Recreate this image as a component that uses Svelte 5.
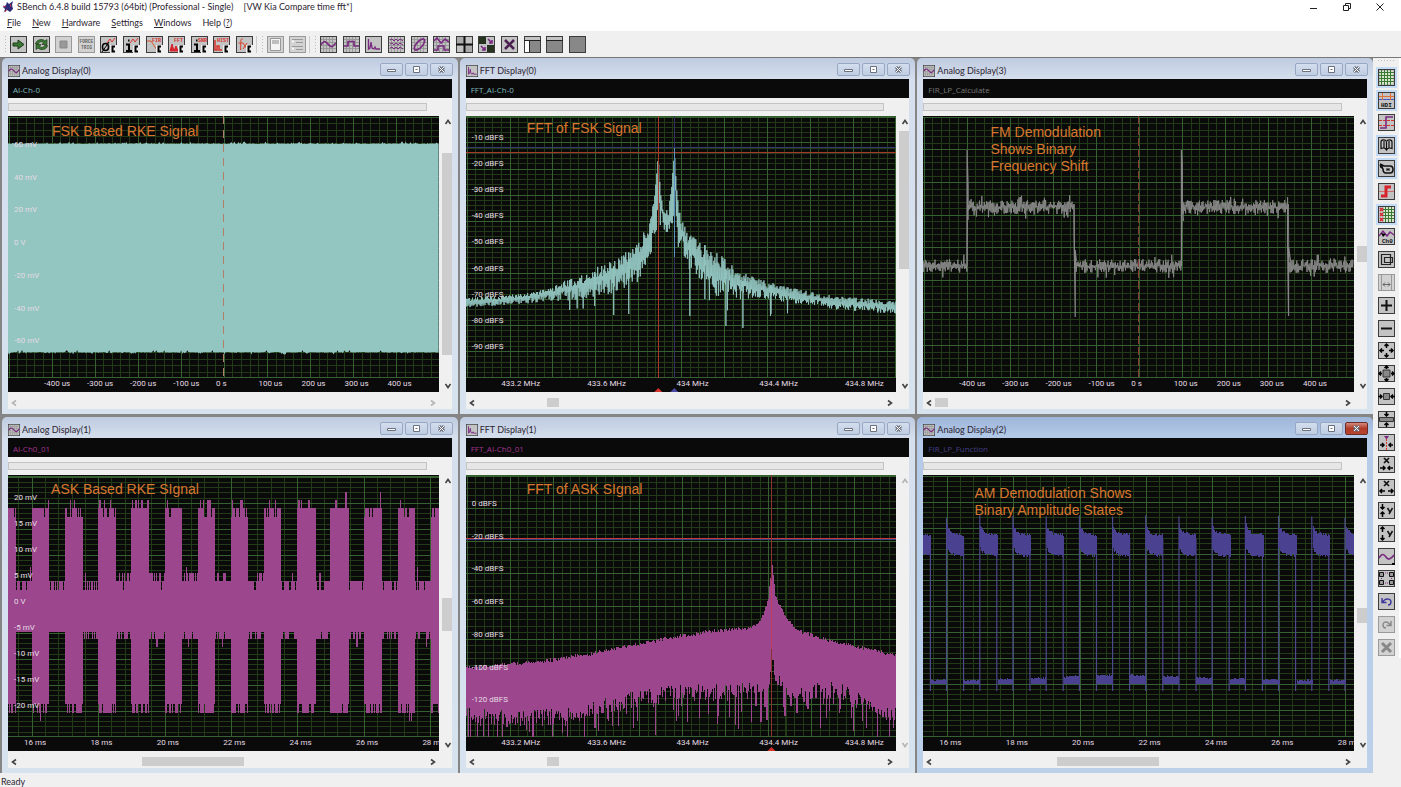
<script>
	// small seeded generator so the traces look the same on every load
	function seeded(seed) {
		let s = seed;
		return () => {
			s = (s * 1664525 + 1013904223) % 4294967296;
			return s / 4294967296;
		};
	}

	const W = 430;
	const H = 262;

	// linear lookup in a list of [x, a, b] rows
	function lookup(rows, x) {
		for (let i = 1; i < rows.length; i++) {
			if (x <= rows[i][0]) {
				const p = rows[i - 1];
				const q = rows[i];
				const t = (x - p[0]) / (q[0] - p[0] || 1);
				return [p[1] + (q[1] - p[1]) * t, p[2] + (q[2] - p[2]) * t];
			}
		}
		const last = rows[rows.length - 1];
		return [last[1], last[2]];
	}

	const f = (n) => n.toFixed(1);

	function grid(x0, dx, y0, dy) {
		let minor = '';
		let major = '';
		for (let i = -5; i < 70; i++) {
			const x = x0 + (i * dx) / 5;
			if (x < 0 || x > W) continue;
			if (i % 5 === 0) major += `M${f(x)} 1V${H}`;
			else minor += `M${f(x)} 1V${H}`;
		}
		for (let i = -5; i < 70; i++) {
			const y = y0 + (i * dy) / 5;
			if (y < 0 || y > H) continue;
			if (i % 5 === 0) major += `M0 ${f(y)}H${W}`;
			else minor += `M0 ${f(y)}H${W}`;
		}
		return { minor, major: major + `M0 1.5H${W}M0 ${H - 0.5}H${W}` };
	}

	function fskTrace() {
		const r = seeded(7);
		let d = 'M0 28';
		for (let x = 0; x <= W; x += 1) d += `L${x} ${f(28 - (r() > 0.8 ? r() * 2.5 : r() * 0.6))}`;
		for (let x = W; x >= 0; x -= 1) d += `L${x} ${f(236 + (r() > 0.8 ? r() * 2.5 : r() * 0.6) - (r() > 0.95 ? 2 : 0))}`;
		return d + 'Z';
	}

	function fftFskTrace() {
		const rows = [
			[0, 182, 192], [43, 179, 189], [76, 174, 186], [110, 160, 184], [143, 146, 178], [170, 129, 170],
			[183, 106, 146], [188, 83, 124], [191, 50, 110], [192, 37, 60], [194, 75, 100], [198, 95, 117],
			[202, 93, 119], [206, 65, 110], [208, 31, 90], [211, 80, 125], [216, 104, 135], [221, 112, 150],
			[233, 124, 164], [250, 135, 180], [270, 153, 182], [293, 163, 183], [326, 172, 187], [370, 180, 194], [430, 185, 198]
		];
		const deep = { 104: 194, 148: 199, 163: 198, 224: 200, 260: 210, 277: 212, 305: 198, 129: 190, 239: 183 };
		const r = seeded(21);
		let d = 'M0 187';
		let n = 0;
		for (let x = 0; x <= W; x += 0.5, n++) {
			const [hi, lo] = lookup(rows, x);
			const span = lo - hi;
			const peak = (x > 186 && x < 195) || (x > 203 && x < 212);
			let y;
			if (n % 2) y = hi + r() * span * (peak ? 0.1 : 0.4);
			else y = lo - r() * span * 0.5 + (r() > 0.93 && x > 90 && x < 330 ? r() * 20 : 0);
			d += `L${f(x)} ${f(y)}`;
			const key = Math.round(x);
			if (deep[key]) {
				d += `V${deep[key]}V${f(y)}`;
				delete deep[key];
			}
		}
		return d;
	}

	function fmTrace() {
		const r = seeded(5);
		let d = 'M0 150';
		let n = 0;
		for (let x = 0; x <= W; x += 0.6, n++) {
			const high = (x > 44 && x < 151) || (x > 258 && x < 365);
			const base = high ? 91 : 150;
			const amp = r() > 0.85 ? 12 : 7;
			d += `L${f(x)} ${f(base + (n % 2 ? 1 : -1) * r() * amp)}`;
		}
		return d;
	}
	const fmEdges = 'M44 150V34L45 70V104M151 88V120L152 201V134L153 145M258 150V34L259 48V88L260 105M364 81V130L365 200V131L367 145';

	function askTrace() {
		const r = seeded(33);
		let d = '';
		for (let x = 0; x < W; x++) {
			const phase = (((x + 9.6) % 33.15) + 33.15) % 33.15;
			const on = phase < 17.3;
			const mid = Math.exp(-(((x - 200) / 90) ** 2));
			const q = r();
			const p = r();
			let top;
			let bottom;
			if (on) {
				top = q < 0.03 + mid * 0.35 ? 25 : q > 0.8 ? 42 : 33;
				if (q < 0.01 && x > 60) top = 17;
				bottom = p < 0.4 ? 229 : p > 0.97 ? 246 : 238;
			} else {
				top = q < mid * 0.6 ? 98 : q > 0.75 - mid && q > 0.6 + mid * 0.5 ? 115 : 106;
				if (q < 0.02) top = 92;
				bottom = p < 0.5 - mid * 0.3 ? 157 : p > 0.97 ? 172 : 164;
				if (x < 60) bottom = 157;
			}
			d += `M${x}.5 ${top}V${bottom}`;
		}
		return d;
	}

	function fftAskTrace() {
		const rows = [
			[0, 194, 237], [45, 190, 241], [85, 186, 238], [128, 179, 229], [168, 171, 221], [208, 163, 214],
			[248, 157, 214], [282, 154, 214], [292, 151, 214], [298, 137, 214], [302, 125, 214], [305, 92, 174],
			[308, 121, 195], [315, 137, 208], [328, 156, 214], [361, 166, 214], [395, 174, 224], [430, 181, 241]
		];
		const r = seeded(91);
		let d = '';
		for (let x = 0; x < W; x++) {
			const [hi, lo] = lookup(rows, x);
			const top = hi - 3 + r() * 4;
			let bottom = lo - 5 + r() * 17;
			if (r() > 0.8) bottom += r() * 36;
			if (x > 250 && r() > 0.5) bottom -= r() * 6;
			d += `M${x}.5 ${f(top)}V${f(Math.min(bottom, H))}`;
		}
		return d;
	}

	function amTrace() {
		const r = seeded(14);
		let body = '';
		let edges = '';
		for (let x = 0; x < W; x++) {
			const phase = (((x + 9.6) % 33.15) + 33.15) % 33.15;
			if (phase < 17.3) {
				const decay = Math.exp(-phase / 3);
				body += `M${x}.5 ${f(61 - decay * 11 - r() * 3)}V${f(79 - decay * 9 + r() * 3)}`;
			} else {
				body += `M${x}.5 ${f(206 - r() * 2 - 5 * Math.exp(-(((x - 200) / 90) ** 2)))}V209`;
			}
		}
		for (let k = 0; k < 14; k++) {
			const a = -9.6 + k * 33.15;
			if (a > 0) edges += `M${f(a)} ${f(40 + r() * 3)}V216`;
			edges += `M${f(a + 17)} 64V216`;
		}
		return { body, edges };
	}

	const am = amTrace();

	// label helpers, positions are in plot units
	const series = (texts, start, step) => texts.map((text, i) => ({ text, at: start + i * step }));
	const micros = series(['-400 us', '-300 us', '-200 us', '-100 us', '0 s', '100 us', '200 us', '300 us', '400 us'], 49, 43);
	micros[4].at = 213;
	micros.slice(5).forEach((m) => (m.at -= 2));
	const millis = series(['16 ms', '18 ms', '20 ms', '22 ms', '24 ms', '26 ms', '28 ms'], 27, 66.3);
	const mega = series(['433.2 MHz', '433.6 MHz', '434 MHz', '434.4 MHz', '434.8 MHz'], 55, 85.8);

	const displays = [
		{
			title: 'Analog Display(0)', icon: 'sine', channel: 'AI-Ch-0', color: '#7fb8bb',
			grid: grid(44, 43, 34, 32.7),
			yLabels: series(['60 mV', '40 mV', '20 mV', '0 V', '-20 mV', '-40 mV', '-60 mV'], 29, 32.7),
			xLabels: micros,
			note: ['FSK Based RKE Signal'], noteX: 44, noteY: 7,
			fill: fskTrace(), trace: '#93c5c1',
			cursors: [{ d: 'M215.5 0V262', color: '#b08068', dash: '8 6' }],
			v: [10, 80], h: null
		},
		{
			title: 'FFT Display(0)', icon: 'fft', channel: 'FFT_AI-Ch-0', color: '#7fb8bb',
			grid: grid(44, 42.8, 0.8, 26.1),
			yLabels: series(['-10 dBFS', '-20 dBFS', '-30 dBFS', '-40 dBFS', '-50 dBFS', '-60 dBFS', '-70 dBFS', '-80 dBFS', '-90 dBFS'], 22, 26.1),
			xLabels: mega,
			note: ['FFT of FSK Signal'], noteX: 61, noteY: 4,
			line: fftFskTrace(), trace: '#93c5c1',
			cursors: [
				{ d: 'M0 31.5H430', color: '#333a6e' },
				{ d: 'M0 36.5H430', color: '#a8382c' },
				{ d: 'M192 0V262', color: '#a8382c' },
				{ d: 'M208 0V262', color: '#34325c' },
				{ d: 'M208 32V141', color: '#5c90c4' }
			],
			marks: [{ x: 192, color: '#d8322c' }, { x: 208, color: '#4a48a0' }],
			v: [1, 55], h: [17, 3]
		},
		{
			title: 'Analog Display(3)', icon: 'sine', channel: 'FIR_LP_Calculate', color: '#777',
			grid: grid(44, 43, 1.3, 32.6),
			yLabels: [],
			xLabels: micros,
			note: ['FM Demodulation', 'Shows Binary', 'Frequency Shift'], noteX: 67, noteY: 8,
			line: fmTrace(), extra: fmEdges, extraColor: '#858585', trace: '#8a8a8a',
			cursors: [{ d: 'M215.5 0V262', color: '#8c3a34', dash: '8 3' }],
			v: [47, 6], h: [0, 3]
		},
		{
			title: 'Analog Display(1)', icon: 'sine', channel: 'AI-Ch0_01', color: '#a3358f',
			grid: grid(24.2, 66.3, 28.3, 26),
			yLabels: series(['20 mV', '15 mV', '10 mV', '5 mV', '0 V', '-5 mV', '-10 mV', '-15 mV', '-20 mV'], 23, 26),
			xLabels: millis,
			note: ['ASK Based RKE SIgnal'], noteX: 43, noteY: 6,
			line: askTrace(), trace: '#9c468d', crisp: true,
			cursors: [],
			v: [44, 13], h: [30, 25]
		},
		{
			title: 'FFT Display(1)', icon: 'fft', channel: 'FFT_AI-Ch0_01', color: '#a3358f',
			grid: grid(44.3, 43, 33.3, 32.7),
			yLabels: series(['0 dBFS', '-20 dBFS', '-40 dBFS', '-60 dBFS', '-80 dBFS', '-100 dBFS', '-120 dBFS'], 29, 32.7),
			xLabels: mega,
			note: ['FFT of ASK SIgnal'], noteX: 61, noteY: 6,
			line: fftAskTrace(), trace: '#9c468d', crisp: true,
			cursors: [
				{ d: 'M0 64.5H430', color: '#3c3c80' },
				{ d: 'M0 63.5H430', color: '#c04038' },
				{ d: 'M305 0V262', color: '#8c3030' },
				{ d: 'M305 105V174', color: '#c23a60' }
			],
			marks: [{ x: 305, color: '#d8322c' }],
			v: null, h: [17, 3]
		},
		{
			title: 'Analog Display(2)', icon: 'sine', channel: 'FIR_LP_Function', color: '#433f85',
			grid: grid(24.2, 66.3, 1.3, 26),
			yLabels: [],
			xLabels: millis,
			note: ['AM Demodulation Shows', 'Binary Amplitude States'], noteX: 51, noteY: 10,
			line: am.body, extra: am.edges, extraColor: '#4d4a8c', trace: '#4a4190', crisp: true,
			cursors: [],
			v: [48, 6], h: [30, 25]
		}
	];

	const g = '#3a7a34';
	const p = '#7a2a80';
	const meshLines = '<path d="M3.5 1V16M6.5 1V16M9.5 1V16M12.5 1V16M1 3.5H16M1 6.5H16M1 9.5H16M1 12.5H16" stroke="#999"/>';
	const calc = '<path d="M10 9H17V17H10Z" fill="#eee"/><path d="M15 10.5H12.5V15.5H15" stroke="#000" stroke-width="2"/>';
	const tiny = (x, y, t, c = '#d8322c', s = 6) =>
		`<text x="${x}" y="${y}" font-size="${s}" font-weight="700" font-family="Liberation Mono, monospace" fill="${c}">${t}</text>`;
	const arrow = {
		r: (x, y, n = 4) => `<path d="M${x} ${y}h${n}m-2 -2l2 2l-2 2" stroke="#000" stroke-width="1.5"/>`,
		l: (x, y, n = 4) => `<path d="M${x} ${y}h-${n}m2 -2l-2 2l2 2" stroke="#000" stroke-width="1.5"/>`,
		u: (x, y, n = 4) => `<path d="M${x} ${y}v-${n}m-2 2l2 -2l2 2" stroke="#000" stroke-width="1.5"/>`,
		d: (x, y, n = 4) => `<path d="M${x} ${y}v${n}m-2 -2l2 2l2 -2" stroke="#000" stroke-width="1.5"/>`
	};

	const icons = {
		start: `<path d="M3 7H8V4L14 8.5L8 13V10H3Z" fill="${g}" stroke="#1c3a18"/>`,
		loop: `<path d="M2.500 8C3 4 9 2 12 5L14 3.500V8.500H9L10.500 6.500C8 5 6 6 5.500 8ZM14.500 9.500C14 13.500 8 15 5 12L3 13.500V8.500H8L6.500 10.500C8.500 12 11 11.500 11.500 9.500Z" fill="${g}" stroke="#1c3a18" stroke-width=".7"/>`,
		stop: '<path d="M5 5H12V12H5Z" fill="#999" stroke="#888"/>',
		force: tiny(1.5, 7, 'FORCE', '#666', 4.6) + tiny(3, 13, 'TRIG', '#666', 4.6),
		phase: '<path d="M7 7L10 3L12 6L15 2" stroke="#d8322c"/><ellipse cx="5.500" cy="11" rx="3" ry="3.500" stroke="#000" stroke-width="1.600"/><path d="M2 16L9 6" stroke="#000"/>' + calc,
		info: '<path d="M7 7L10 3L12 6L15 2" stroke="#d8322c"/><path d="M3 8.500H6V15M3 15H9M5 4.500H6.500" stroke="#000" stroke-width="2"/>' + calc,
		fir: '<path d="M1 5H5L11 14" stroke="#d8562c"/>' + tiny(6, 6, 'FIR', '#d8322c', 5) + calc,
		fftCalc: '<path d="M2 15L4 8L6 15ZM6 15L8 10L10 15Z" fill="#d8222c" stroke="#d8222c"/>' + tiny(6, 6, 'FFT', '#d8322c', 5) + calc,
		snr: '<path d="M3 8.500H6V15M3 15H9M5 4.500H6.500" stroke="#000" stroke-width="2"/>' + tiny(7, 6, 'SNR', '#d8322c', 5) + calc,
		hist: '<path d="M2 4V14H4V10H6V14H9" stroke="#d8322c" stroke-width="1.500"/>' + tiny(4, 6, 'HIST', '#d8322c', 5) + calc,
		fx: '<path d="M7 3C4 2 5 6 4.500 14M2.500 7H7M7 7L11 13M11 7L7 13" stroke="#d8422c"/>' + calc,
		page: '<path d="M3.500 2.500H13.500V14.500H3.500Z" fill="#f4f4f4" stroke="#999"/><path d="M5 5H12M5 7H12" stroke="#888"/>',
		list: '<path d="M3 3.500H14M7 6.500H14M3 10.500H14M7 13.500H14" stroke="#999"/><path d="M3 5.500H5M3 12.500H5" stroke="#f8f8f8" stroke-width="2"/>',
		sine: meshLines + `<path d="M1 9C3 5 5 5 7 7S11 12 13 10L16 7" stroke="${p}" stroke-width="1.700"/>`,
		step: meshLines + `<path d="M1 10H5V5.500H11V10H16" stroke="${p}" stroke-width="1.700"/>`,
		fft: `<path d="M3.500 3V13L5 12L6 6L7 12L9 13L10 11L11 13H15" stroke="${p}" stroke-width="1.300"/>`,
		multi: meshLines + `<path d="M2 4L4 3L6 5L8 3L10 5L12 3L15 5M2 8L4 7L6 9L8 7L10 9L12 7L15 9M2 12L4 11L6 13L8 11L10 13L12 11L15 13" stroke="${p}"/>`,
		ellipse: meshLines + `<ellipse cx="8.500" cy="8.500" rx="7" ry="3" transform="rotate(-48 8.500 8.500)" stroke="${p}" stroke-width="1.700"/>`,
		mixed: meshLines + `<path d="M1 5L4 2L8 7L12 3L16 6M1 14H5V10H11V14H16" stroke="${p}" stroke-width="1.600"/>`,
		tile: '<path d="M1 1H8V8H1ZM9 9H16V16H9Z" fill="#aaa"/><path d="M8.500 0V17M0 8.500H17" stroke="#111" stroke-width="2"/>',
		swap: `<path d="M1 1H8V8H1ZM9 9H16V16H9Z" fill="#26331f"/><path d="M10 3L14 7M14 4V7H11M3 10L7 14M7 11V14H4" stroke="${p}" stroke-width="1.600"/>`,
		cross: `<path d="M4 4L13 13M13 4L4 13" stroke="#4b2050" stroke-width="2.600"/>`,
		splitLeft: '<path d="M1 5H16V16H1Z" fill="#888"/><path d="M1 5H5V16H1Z" fill="#fff"/><path d="M0 4.500H17M5.500 5V16" stroke="#222"/>',
		splitTop: '<path d="M1 5H16V16H1Z" fill="#888"/><path d="M0 4.500H17" stroke="#222"/>',
		blank: '<path d="M1 1H16V16H1Z" fill="#888"/>',
		gridOn: `<path d="M2 2H15V15H2Z" fill="#d8e4cc"/><path d="M3.500 1V16M6.500 1V16M9.500 1V16M12.500 1V16M1 3.500H16M1 6.500H16M1 9.500H16M1 12.500H16" stroke="${g}"/>`,
		hdi: '<path d="M1 4.500H16" stroke="#e0703c"/><path d="M1 7.500H16" stroke="#4858c0"/><path d="M4.500 1V8M12.500 1V8" stroke="#e0703c"/>' + tiny(3, 15, 'HDI', '#111', 6),
		hyst: `<path d="M1 6.500H16M1 11.500H16" stroke="#d8322c" stroke-dasharray="3 1"/><path d="M2 14H8V3H15" stroke="${p}" stroke-width="1.600"/>`,
		book: '<path d="M8.500 5V13M8.500 4.500C7.500 2.500 3 2 3 5V11.500C5 10.500 7.500 11 8.500 13C9.500 11 12 10.500 14 11.500V5C14 2 9.500 2.500 8.500 4.500M6 4V10.500M11 4V10.500" stroke="#111" stroke-width="1.200"/>',
		tag: '<path d="M2 4L6 6H12Q15 6 15 9.500T12 13H8Q5 13 5 9L2 5M2 7H5" stroke="#111" stroke-width="1.600"/><path d="M9 8V11M11 8V11M9 9.500H11" stroke="#111"/>',
		edge: '<path d="M3 13H8V4H13" stroke="#d8222c" stroke-width="3"/><path d="M1 8.500H16" stroke="#d8322c" stroke-width=".6"/>',
		gridMarks: `<path d="M6 1H16V16H6Z" fill="#d8e4cc"/><path d="M7.500 1V16M10.500 1V16M13.500 1V16M5 3.500H16M5 6.500H16M5 9.500H16M5 12.500H16" stroke="${g}"/><path d="M2 2L5 5M5 2L2 5M2 7L5 10M5 7L2 10M2 12L5 15M5 12L2 15" stroke="#d8222c" stroke-width="1.400"/>`,
		cursor: `<path d="M1 8L5 3L9 8L12 4L16 7" stroke="${p}" stroke-width="1.400"/><path d="M3 5L8 6L5 9Z" fill="#000"/>` + tiny(4, 15, 'Ch0', '#111', 6),
		frame: '<path d="M3.500 3.500H12.500V13.500H3.500ZM6.500 6.500H14.500V11.500H6.500Z" stroke="#222" stroke-width="1.200"/>',
		fitWidth: '<path d="M3.500 1V16M13.500 1V16" stroke="#999"/><path d="M5 10.500H12M7 8.500L5 10.500L7 12.500M10 8.500L12 10.500L10 12.500" stroke="#666"/>',
		plus: '<path d="M3 8.500H14M8.500 3V14" stroke="#111" stroke-width="2"/>',
		minus: '<path d="M3 8.500H14" stroke="#111" stroke-width="2"/>',
		expand: arrow.u(8.5, 6) + arrow.d(8.5, 11) + arrow.l(6, 8.5) + arrow.r(11, 8.5),
		zoomIn: '<path d="M5 5H12V12H5Z" fill="#888" stroke="#333"/>' + arrow.u(8.5, 4, 3) + arrow.d(8.5, 13, 3) + arrow.l(4, 8.5, 3) + arrow.r(13, 8.5, 3),
		squeezeX: '<path d="M5.500 5.500H11.500V11.500H5.500Z" fill="#888" stroke="#333"/>' + arrow.r(0, 8.5) + arrow.l(17, 8.5),
		squeezeY: '<path d="M1.500 6.500H15.500V10.500H1.500Z" fill="#888" stroke="#333"/>' + arrow.d(8.5, 1) + arrow.u(8.5, 16),
		centre: `<path d="M6 2H11L8.500 5.500Z" fill="${p}"/><path d="M8.500 5V16" stroke="#d8322c" stroke-dasharray="2 1"/>` + arrow.r(2, 11) + arrow.l(15, 11),
		xIn: '<path d="M6 2L11 7M11 2L6 7" stroke="#111" stroke-width="1.700"/>' + arrow.r(2, 12, 5) + arrow.l(15, 12, 5),
		xOut: '<path d="M6 2L11 7M11 2L6 7" stroke="#111" stroke-width="1.700"/>' + arrow.l(7, 12, 5) + arrow.r(10, 12, 5),
		yIn: '<path d="M9.500 6L12 10M14.500 6L11 12" stroke="#111" stroke-width="1.500"/>' + arrow.d(4.5, 2, 5) + arrow.u(4.5, 15, 5),
		yOut: '<path d="M9.500 6L12 10M14.500 6L11 12" stroke="#111" stroke-width="1.500"/>' + arrow.u(4.5, 7, 5) + arrow.d(4.5, 10, 5),
		wave: `<path d="M1 10C4 5 6 6 8 9S12 12 16 7" stroke="${p}" stroke-width="1.700"/><path d="M14 15H17V17H14Z" fill="#000"/>`,
		nodes: `<path d="M5 3H12M5 13H12M3.500 6V11M13.500 6V11" stroke="${p}" stroke-dasharray="1 1"/><path d="M1.500 2.500H5.500V6.500H1.500ZM11.500 2.500H15.500V6.500H11.500ZM1.500 10.500H5.500V14.500H1.500ZM11.500 10.500H15.500V14.500H11.500Z" fill="#999" stroke="#111"/>`,
		undo: '<path d="M4 5V9.500H8.500M4 9.500L6.500 7C9 5 13 6 13 9C13 11 11.500 12 10 12" stroke="#3c389c" stroke-width="1.400"/>',
		redo: '<path d="M13 5V9.500H8.500M13 9.500L10.500 7C8 5 5 6 5 9C5 11 6.500 12 8 12" stroke="#888" stroke-width="1.400"/>',
		remove: '<path d="M4 4L13 13M13 4L4 13" stroke="#888" stroke-width="3"/>'
	};

	const toolGroups = [
		{ cls: 'run', tools: ['start', 'loop', 'stop', 'force', 'phase', 'info', 'fir', 'fftCalc', 'snr', 'hist', 'fx'] },
		{ cls: 'report', tools: ['page', 'list'] },
		{ cls: 'layout', tools: ['sine', 'step', 'fft', 'multi', 'ellipse', 'mixed', 'tile', 'swap', 'cross', 'splitLeft', 'splitTop', 'blank'] }
	];
	const sideTools = [
		'gridOn', 'hdi', 'hyst', 'book', 'tag', 'edge', 'gridMarks', 'cursor', 'frame', 'fitWidth', 'plus', 'minus', 'expand',
		'zoomIn', 'squeezeX', 'squeezeY', 'centre', 'xIn', 'xOut', 'yIn', 'yOut', 'wave', 'nodes', 'undo', 'redo', 'remove'
	];
	const dimmed = ['stop', 'force', 'page', 'list', 'fitWidth', 'redo', 'remove'];

	const menus = ['File', 'New', 'Hardware', 'Settings', 'Windows'];

	let pressed = $state(['gridOn', 'hdi', 'book', 'tag', 'gridMarks']);
	let active = $state(5);

	function toggle(name) {
		pressed = pressed.includes(name) ? pressed.filter((n) => n !== name) : [...pressed, name];
	}
</script>

{#snippet tool(name)}
	<svg class="icon" class:dim={dimmed.includes(name)} viewBox="0 0 17 17" fill="none" aria-hidden="true">
		<rect class="face" x="0.5" y="0.5" width="16" height="16" />
		{@html icons[name]}
	</svg>
{/snippet}

{#snippet chevron(d)}
	<svg viewBox="0 0 12 12" fill="none" aria-hidden="true"><path {d} stroke="currentColor" stroke-width="1.6" /></svg>
{/snippet}

<div class="app">
	<header class="titlebar">
		<svg class="logo" viewBox="0 0 12 12" aria-hidden="true">
			<path d="M1 6L4 4L5 1L7 3L11 0L10 4L11 8L8 11L5 9L2 11L3 8Z" fill="#2b2c78" />
			<path d="M1 5L4 6M5 8L3 11M8 3L9 6" stroke="#c03048" fill="none" />
		</svg>
		<h1>SBench 6.4.8 build 15793 (64bit) (Professional - Single) <span>[VW Kia Compare time fft*]</span></h1>
		<div class="app-controls">
			<button aria-label="Minimize"><svg viewBox="0 0 10 10"><path d="M1 6.500H8" /></svg></button>
			<button aria-label="Restore"><svg viewBox="0 0 10 10"><path d="M1.500 3.500H6.500V8.500H1.500ZM3.500 3V1.500H8.500V6.500H7" /></svg></button>
			<button aria-label="Close"><svg viewBox="0 0 10 10"><path d="M1.500 1.500L8.500 8.500M8.500 1.500L1.500 8.500" /></svg></button>
		</div>
	</header>

	<nav class="menubar">
		{#each menus as menu}
			<button><u>{menu[0]}</u>{menu.slice(1)}</button>
		{/each}
		<button>Help (<u>?</u>)</button>
	</nav>

	<div class="toolbar">
		{#each toolGroups as group}
			<div class="handle"></div>
			<div class="tools {group.cls}">
				{#each group.tools as name}
					<button aria-label={name}>{@render tool(name)}</button>
				{/each}
			</div>
		{/each}
	</div>

	<div class="main">
		<main class="desk">
			{#each displays as win, i}
				<!-- svelte-ignore a11y_click_events_have_key_events, a11y_no_noninteractive_element_interactions -->
				<section class="window" class:active={active === i} onclick={() => (active = i)}>
					<div class="caption">
						<svg class="caption-icon" viewBox="0 0 17 17" fill="none" aria-hidden="true">
							<rect class="face" x="0.5" y="0.5" width="16" height="16" />
							{@html icons[win.icon]}
						</svg>
						<h2>{win.title}</h2>
						<div class="controls">
							<button aria-label="Minimize"><svg viewBox="0 0 9 7"><path d="M0.500 3.500H8.500V5.500H0.500Z" /></svg></button>
							<button aria-label="Maximize"><svg viewBox="0 0 9 7"><path d="M1.500 0.500H7.500V6.500H1.500ZM3.500 3.500H5.500" /></svg></button>
							<button class="close" aria-label="Close"><svg viewBox="0 0 9 7"><path class="halo" d="M2 1L7 6M7 1L2 6" /><path class="stroke" d="M2 1L7 6M7 1L2 6" /></svg></button>
						</div>
					</div>

					<div class="client">
						<div class="channel" style:color={win.color}>{win.channel}</div>
						<progress value="0" max="100" aria-label="Progress"></progress>

						<div class="view">
							<div class="plot">
								<svg viewBox="0 0 430 276" preserveAspectRatio="none" fill="none" aria-hidden="true">
									<path class="minor" d={win.grid.minor} />
									<path class="major" d={win.grid.major} />
									{#if win.extra}<path d={win.extra} stroke={win.extraColor} stroke-width="1.2" />{/if}
									{#if win.fill}<path d={win.fill} fill={win.trace} />{/if}
									{#if win.line}<path class:crisp={win.crisp} d={win.line} stroke={win.trace} stroke-width={win.crisp ? 1.1 : 0.9} />{/if}
									{#each win.cursors as c}
										<path class="crisp" d={c.d} stroke={c.color} stroke-dasharray={c.dash} />
									{/each}
									{#each win.marks ?? [] as m}
										<path d="M{m.x - 4} 276L{m.x} 272L{m.x + 4} 276Z" fill={m.color} />
									{/each}
								</svg>
								<p class="note" style:left="{(win.noteX / 430) * 100}%" style:top="{(win.noteY / 276) * 100}%">
									{#each win.note as line}<span>{line}</span>{/each}
								</p>
								{#each win.yLabels as label}
									<span class="y-label" style:top="{(label.at / 276) * 100}%">{label.text}</span>
								{/each}
								{#each win.xLabels as label}
									<span class="x-label" style:left="{(label.at / 430) * 100}%">{label.text}</span>
								{/each}
							</div>

							<div class="scroll vertical" class:off={!win.v}>
								<button aria-label="Scroll up">{@render chevron('M3.5 8L6 4.5L8.500 8')}</button>
								<div class="track">
									{#if win.v}<div class="thumb" style:top="{win.v[0]}%" style:height="{win.v[1]}%"></div>{/if}
								</div>
								<button aria-label="Scroll down">{@render chevron('M3.5 4L6 7.500L8.500 4')}</button>
							</div>
						</div>

						<div class="scroll horizontal" class:off={!win.h}>
							<button aria-label="Scroll left">{@render chevron('M8 3.5L4.500 6L8 8.500')}</button>
							<div class="track">
								{#if win.h}<div class="thumb" style:left="{win.h[0]}%" style:width="{win.h[1]}%"></div>{/if}
							</div>
							<button aria-label="Scroll right">{@render chevron('M4 3.5L7.500 6L4 8.500')}</button>
						</div>
					</div>
				</section>
			{/each}
		</main>

		<aside class="side">
			<div class="side-handle"></div>
			{#each sideTools as name}
				<button class:pressed={pressed.includes(name)} aria-label={name} onclick={() => toggle(name)}>{@render tool(name)}</button>
			{/each}
		</aside>
	</div>

	<footer>Ready</footer>
</div>

<style>
	:global(body) {
		margin: 0;
		background: #f0f0f0;
	}

	.app {
		display: flex;
		flex-direction: column;
		min-height: 100vh;
		background: #f0f0f0;
		color: #2c2430;
		font: 9px/12px Lato, "Open Sans", sans-serif;
	}

	button {
		display: grid;
		place-items: center;
		margin: 0;
		padding: 0;
		border: 0;
		background: none;
		color: inherit;
		font: inherit;
	}

	h1,
	h2,
	p {
		margin: 0;
		font: inherit;
	}

	.titlebar {
		display: flex;
		align-items: center;
		gap: 3px;
		height: 15px;
		padding: 0 16px 2px 2px;
		box-sizing: border-box;
		background: #fff;
	}

	.logo {
		width: 12px;
		height: 12px;
	}

	h1 {
		flex: 1;
		white-space: nowrap;
	}

	h1 span {
		margin-left: 8px;
	}

	.app-controls {
		display: flex;
		gap: 23px;
	}

	.app-controls svg {
		width: 10px;
		height: 10px;
		fill: none;
		stroke: #222;
	}

	.menubar {
		display: flex;
		gap: 11px;
		height: 16px;
		padding: 0 7px;
		background: #fff;
	}

	.menubar button {
		display: block;
		line-height: 16px;
	}

	.toolbar {
		display: flex;
		align-items: center;
		height: 27px;
		box-sizing: border-box;
		border-bottom: 1px solid #777;
	}

	.handle {
		width: 3px;
		height: 18px;
		margin: 0 3px 0 4px;
		background: radial-gradient(circle, #bbb 1px, transparent 1px) 0 0 / 3px 3px;
	}

	.tools {
		display: flex;
		justify-content: space-between;
	}

	.run {
		width: 243px;
	}

	.report {
		width: 39px;
	}

	.layout {
		width: 266px;
	}

	.run,
	.report {
		padding-right: 3px;
		border-right: 1px solid #ccc;
	}

	.icon {
		display: block;
		width: 17px;
		height: 17px;
	}

	.face {
		fill: #c3c3c3;
		stroke: #3c3c3c;
	}

	.dim .face {
		fill: #d2d2d2;
		stroke: #9a9a9a;
	}

	.main {
		display: flex;
		flex: 1;
	}

	.desk {
		flex: 1;
		display: grid;
		grid-template-columns: repeat(3, minmax(0, 1fr));
		grid-auto-rows: 1fr;
		gap: 3px 2px;
		padding-left: 2px;
		background: #858585;
	}

	.window {
		display: flex;
		flex-direction: column;
		padding: 0 6px 5px;
		border-radius: 5px 5px 0 0;
		background: linear-gradient(#bfcbe0, #d5dfed 22px, #d7e2ef);
	}

	.window.active {
		background: linear-gradient(#9fb6da, #b5cbe9 22px, #bcd0ea);
	}

	.caption {
		display: flex;
		align-items: center;
		height: 21px;
		margin-right: -1px;
	}

	.caption-icon {
		width: 12px;
		height: 12px;
		margin-top: 4px;
	}

	h2 {
		flex: 1;
		margin: 5px 0 0 2px;
	}

	.controls {
		display: flex;
		gap: 2px;
		margin-top: 1px;
	}

	.controls button {
		width: 23px;
		height: 13px;
		box-sizing: border-box;
		border: 1px solid #98a8c4;
		border-radius: 2px;
		background: linear-gradient(#d3deee, #bfcde2);
	}

	.controls svg {
		width: 9px;
		height: 7px;
		fill: #fff;
		stroke: #6c7180;
	}

	.controls .halo {
		stroke: #6c7180;
		stroke-width: 3;
	}

	.controls .stroke {
		stroke: #fff;
	}

	.active .close {
		border-color: #6c2c28;
		background: linear-gradient(#d48a7c, #b03a28 50%, #b8462f);
	}

	.client {
		flex: 1;
		display: flex;
		flex-direction: column;
		background: #f0f0f0;
	}

	.channel {
		height: 19px;
		padding-left: 5px;
		background: #0a0a0a;
		font: 8px/21px "Open Sans", sans-serif;
	}

	progress {
		appearance: none;
		display: block;
		width: auto;
		height: 8px;
		margin: 5px 25px 5px 0;
		box-sizing: border-box;
		border: 1px solid #c4c4c4;
		background: #e6e6e6;
	}

	progress::-webkit-progress-bar {
		background: #e6e6e6;
	}

	.view {
		flex: 1;
		display: flex;
	}

	.plot {
		position: relative;
		flex: 1;
		min-height: 220px;
		overflow: hidden;
		background: #0a0a0a;
		color: #e4dce4;
		font: 8px/10px Roboto, sans-serif;
	}

	.plot svg {
		position: absolute;
		width: 100%;
		height: 100%;
	}

	.minor {
		stroke: #223a17;
		shape-rendering: crispEdges;
	}

	.major {
		stroke: #35602f;
		shape-rendering: crispEdges;
	}

	.crisp {
		shape-rendering: crispEdges;
	}

	.note {
		position: absolute;
		color: #d8762f;
		font: 14px/17px "Liberation Sans", Arial, sans-serif;
	}

	.note span {
		display: block;
		white-space: nowrap;
	}

	.y-label {
		position: absolute;
		left: 6px;
		transform: translateY(-50%);
	}

	.x-label {
		position: absolute;
		bottom: 3px;
		transform: translateX(-50%);
		white-space: nowrap;
	}

	.scroll {
		display: flex;
		color: #444;
	}

	.scroll svg {
		display: block;
		width: 12px;
		height: 12px;
	}

	.off {
		color: #b4b4b4;
	}

	.vertical {
		flex-direction: column;
		width: 10px;
		margin-left: 3px;
	}

	.horizontal {
		height: 12px;
		margin: 5px 13px 0 0;
	}

	.track {
		position: relative;
		flex: 1;
	}

	.thumb {
		position: absolute;
		background: #cdcdcd;
	}

	.vertical .thumb {
		width: 100%;
	}

	.horizontal .thumb {
		top: 1px;
		bottom: 2px;
	}

	.side {
		display: flex;
		flex-direction: column;
		justify-content: space-between;
		align-items: center;
		align-self: flex-start;
		width: 28px;
		height: 600px;
		padding-top: 1px;
		box-sizing: border-box;
		border-right: 2px solid #fff;
	}

	.side-handle {
		width: 19px;
		height: 3px;
		margin-bottom: 3px;
		background: radial-gradient(circle, #bbb 1px, transparent 1px) 0 0 / 3px 3px;
	}

	.side button {
		width: 21px;
		height: 21px;
	}

	.pressed {
		background: #c4dbf6;
	}

	footer {
		height: 14px;
		padding-left: 1px;
		line-height: 18px;
	}
</style>
